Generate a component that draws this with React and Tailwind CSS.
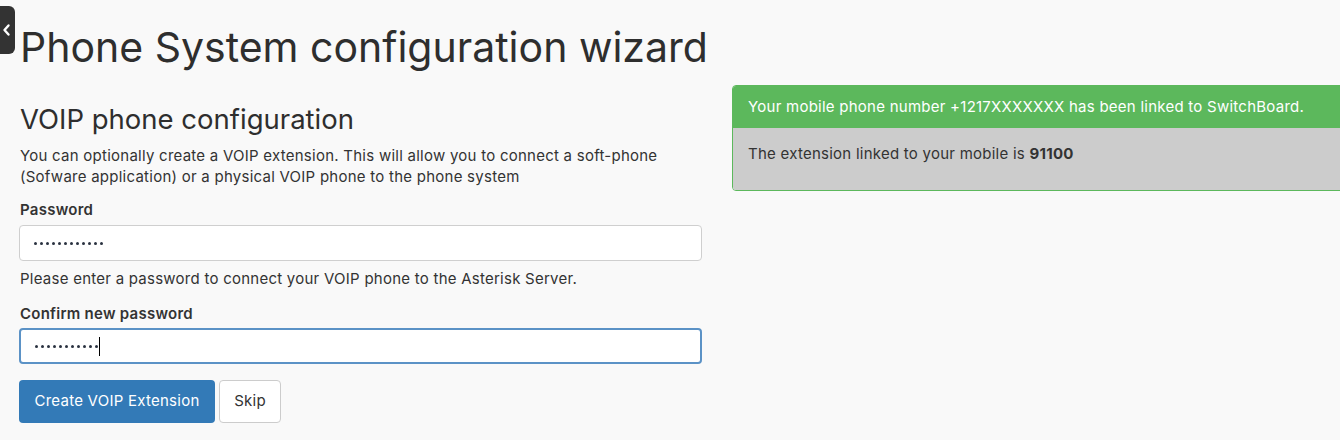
import React from 'react';

const font = { fontFamily: 'Inter, "Open Sans", sans-serif' };

// input look-alike with masked value
const MaskedField = ({ count, focused }) => {
  return (
    <div
      className={`h-[36px] w-[683px] -ml-px rounded-[4px] bg-white px-[14px] flex items-center ${
        focused ? 'border-2 border-[#5b92c6]' : 'border border-[#cfcfcf]'
      }`}
    >
      <div className="flex gap-[3px]">
        {Array.from({ length: count }).map((_, i) => (
          <span key={i} className="h-[3px] w-[3px] rounded-full bg-[#2a3240]" />
        ))}
      </div>
      {focused && <span className="ml-[1px] h-[19px] w-px bg-black" />}
    </div>
  );
};

export default function App() {
  return (
    <div className="relative min-h-[440px] overflow-hidden bg-[#f9f9f9] text-[#333] tracking-[0.25px]" style={font}>
      {/* sidebar toggle */}
      <div className="absolute left-0 top-[6px] h-[48px] w-[15px] rounded-r-[6px] bg-[#333]">
        <svg width="15" height="48" viewBox="0 0 15 48" fill="none">
          <path d="M8.5 19.5 L4.5 24 L8.5 28.5" stroke="white" strokeWidth="2.4" strokeLinecap="round" strokeLinejoin="round" />
        </svg>
      </div>

      <div className="pl-[20px]">
        <h1 className="pt-[23px] text-[41px] leading-[48px] font-normal tracking-[0px] text-[#2e2e2e]">
          Phone System configuration wizard
        </h1>

        <div className="mt-[14px] flex items-start gap-[30px]">
          {/* left column */}
          <div className="w-[682px] shrink-0">
            <h2 className="mt-[18px] text-[27.5px] leading-[32px] font-normal tracking-[0px] text-[#2e2e2e]">VOIP phone configuration</h2>
            <p className="mt-[10px] text-[15px] leading-[21px]">
              You can optionally create a VOIP extension. This will allow you to connect a soft-phone
              <br />
              (Sofware application) or a physical VOIP phone to the phone system
            </p>

            <label className="mt-[13px] block text-[15px] leading-[20px] font-semibold">Password</label>
            <div className="mt-[5px]">
              <MaskedField count={12} />
            </div>
            <p className="mt-[8px] text-[15px] leading-[20px]">
              Please enter a password to connect your VOIP phone to the Asterisk Server.
            </p>

            <label className="mt-[15px] block text-[15px] leading-[20px] font-semibold">Confirm new password</label>
            <div className="mt-[4px]">
              <MaskedField count={11} focused />
            </div>

            <div className="mt-[16px] -ml-px flex gap-[4px]">
              <button className="h-[43px] w-[196px] rounded-[4px] bg-[#337ab7] text-[15px] text-white">
                Create VOIP Extension
              </button>
              <button className="h-[43px] w-[62px] rounded-[4px] border border-[#ccc] bg-white text-[15px] text-[#333]">
                Skip
              </button>
            </div>
          </div>

          {/* linked mobile notice */}
          <div className="w-[680px] shrink-0 overflow-hidden rounded-[4px] border border-[#5cb85c]">
            <div className="flex h-[42px] items-center bg-[#5cb85c] px-[15px] text-[15px] text-white">
              Your mobile phone number +1217XXXXXXX has been linked to SwitchBoard.
            </div>
            <div className="h-[62px] bg-[#cccccc] px-[15px] pt-[16px] text-[15px] leading-[20px]">
              The extension linked to your mobile is <b>91100</b>
            </div>
          </div>
        </div>
      </div>
    </div>
  );
}
